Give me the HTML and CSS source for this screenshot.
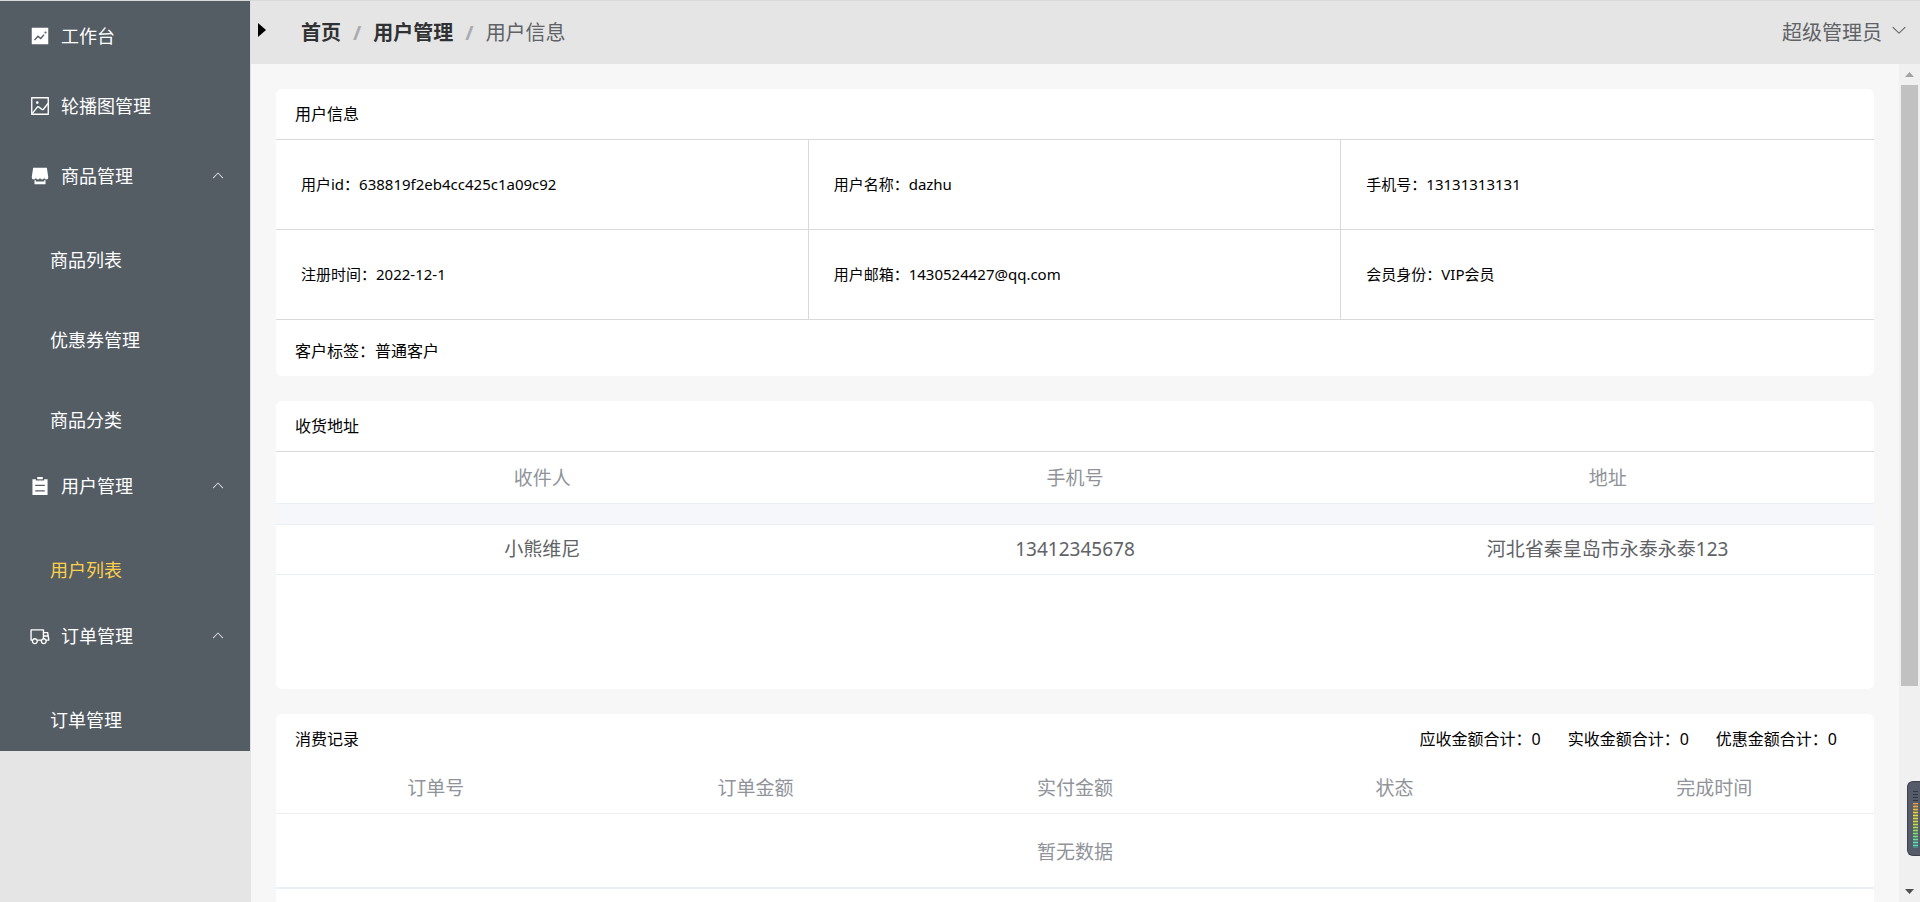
FILE: index.html
```html
<!DOCTYPE html>
<html lang="zh-CN">
<head>
<meta charset="utf-8">
<title>用户信息</title>
<link rel="stylesheet" href="styles.css">
</head>
<body>
<div class="app">
  <aside class="sidebar">
    <nav class="menu">
      <a class="menu-item" href="#">
        <svg class="menu-icon" viewBox="0 0 1024 1024"><path d="M128 896V128h768v768H128zm291.712-327.296 128 102.4 180.16-201.792-47.744-42.624-139.84 156.608-128-102.4-180.16 201.792 47.744 42.624 139.84-156.608zM816 352a48 48 0 1 0-96 0 48 48 0 0 0 96 0z"/></svg>
        <span>工作台</span>
      </a>
      <a class="menu-item" href="#">
        <svg class="menu-icon" viewBox="0 0 1024 1024"><path d="M160 160v704h704V160H160zm-32-64h768a32 32 0 0 1 32 32v768a32 32 0 0 1-32 32H128a32 32 0 0 1-32-32V128a32 32 0 0 1 32-32z"/><path d="M384 288q64 0 64 64t-64 64q-64 0-64-64t64-64zM185.408 876.992l-50.816-38.912L350.72 556.032a96 96 0 0 1 134.592-17.856l1.856 1.472 122.88 99.136a32 32 0 0 0 44.992-4.864l216-269.888 49.92 39.936-215.808 269.824-.256.32a96 96 0 0 1-135.04 14.464l-122.88-99.072-.64-.512a32 32 0 0 0-44.8 5.952L185.408 876.992z"/></svg>
        <span>轮播图管理</span>
      </a>
      <button class="menu-item" type="button" aria-expanded="true">
        <svg class="menu-icon" viewBox="0 0 1024 1024"><path d="M704 704h64v192H256V704h64v64h384v-64zm188.544-152.192C894.528 559.616 896 567.616 896 576a96 96 0 1 1-192 0 96 96 0 1 1-192 0 96 96 0 1 1-192 0 96 96 0 1 1-192 0c0-8.384 1.408-16.384 3.392-24.192L192 128h640l60.544 423.808z"/></svg>
        <span>商品管理</span>
        <svg class="menu-arrow" viewBox="0 0 1024 1024"><path d="m488.832 344.32-339.84 356.672a32 32 0 0 0 0 44.16l.384.384a29.44 29.44 0 0 0 42.688 0l320-335.872 319.872 335.872a29.44 29.44 0 0 0 42.688 0l.384-.384a32 32 0 0 0 0-44.16L535.168 344.32a32 32 0 0 0-46.336 0z"/></svg>
      </button>
      <a class="submenu-item" href="#">商品列表</a>
      <a class="submenu-item" href="#">优惠券管理</a>
      <a class="submenu-item" href="#">商品分类</a>
      <button class="menu-item" type="button" aria-expanded="true">
        <svg class="menu-icon" viewBox="0 0 1024 1024"><path d="M704 192h160v736H160V192h160v64h384v-64zM288 512h448v-64H288v64zm0 256h448v-64H288v64zm96-576V96h256v96H384z"/></svg>
        <span>用户管理</span>
        <svg class="menu-arrow" viewBox="0 0 1024 1024"><path d="m488.832 344.32-339.84 356.672a32 32 0 0 0 0 44.16l.384.384a29.44 29.44 0 0 0 42.688 0l320-335.872 319.872 335.872a29.44 29.44 0 0 0 42.688 0l.384-.384a32 32 0 0 0 0-44.16L535.168 344.32a32 32 0 0 0-46.336 0z"/></svg>
      </button>
      <a class="submenu-item is-active" href="#">用户列表</a>
      <button class="menu-item" type="button" aria-expanded="true">
        <svg class="menu-icon" viewBox="0 0 1024 1024"><path d="M128.896 736H96a32 32 0 0 1-32-32V224a32 32 0 0 1 32-32h576a32 32 0 0 1 32 32v96h164.544a32 32 0 0 1 31.616 27.136l54.144 352A32 32 0 0 1 922.688 736h-91.52a144 144 0 1 1-286.272 0H415.104a144 144 0 1 1-286.272 0zm23.36-64a143.872 143.872 0 0 1 239.488 0H568.32c17.088-25.6 42.24-45.376 71.744-55.808V256H128v416h24.256zm655.488 0h77.632l-19.648-128H704v64.896A144 144 0 0 1 807.744 672zm48.128-192-14.72-96H704v96h151.872zM688 832a80 80 0 1 0 0-160 80 80 0 0 0 0 160zm-416 0a80 80 0 1 0 0-160 80 80 0 0 0 0 160z"/></svg>
        <span>订单管理</span>
        <svg class="menu-arrow" viewBox="0 0 1024 1024"><path d="m488.832 344.32-339.84 356.672a32 32 0 0 0 0 44.16l.384.384a29.44 29.44 0 0 0 42.688 0l320-335.872 319.872 335.872a29.44 29.44 0 0 0 42.688 0l.384-.384a32 32 0 0 0 0-44.16L535.168 344.32a32 32 0 0 0-46.336 0z"/></svg>
      </button>
      <a class="submenu-item" href="#">订单管理</a>
    </nav>
  </aside>

  <div class="page">
    <header class="topbar">
      <button class="collapse" type="button" aria-label="折叠菜单">
        <svg class="collapse-icon" viewBox="0 0 8 14"><path d="M0 0 8 7 0 14z"/></svg>
      </button>
      <nav class="breadcrumb">
        <a class="crumb" href="#">首页</a>
        <span class="crumb-separator">/</span>
        <a class="crumb" href="#">用户管理</a>
        <span class="crumb-separator">/</span>
        <span class="crumb-current">用户信息</span>
      </nav>
      <button class="account" type="button">
        <span>超级管理员</span>
        <svg class="account-arrow" viewBox="0 0 1024 1024"><path d="M831.872 340.864 512 652.672 192.128 340.864a30.592 30.592 0 0 0-42.752 0 29.12 29.12 0 0 0 0 41.6L489.664 714.24a32 32 0 0 0 44.672 0l340.288-331.712a29.12 29.12 0 0 0 0-41.728 30.592 30.592 0 0 0-42.752 0z"/></svg>
      </button>
    </header>

    <div class="viewport">
      <main class="content">
        <section class="card">
          <h2 class="card-title">用户信息</h2>
          <div class="info-grid">
            <div class="info-cell">用户id：638819f2eb4cc425c1a09c92</div>
            <div class="info-cell">用户名称：dazhu</div>
            <div class="info-cell">手机号：13131313131</div>
            <div class="info-cell">注册时间：2022-12-1</div>
            <div class="info-cell">用户邮箱：1430524427@qq.com</div>
            <div class="info-cell">会员身份：VIP会员</div>
          </div>
          <p class="card-note">客户标签：普通客户</p>
        </section>

        <section class="card address-card">
          <h2 class="card-title card-title-ruled">收货地址</h2>
          <table class="table">
            <thead>
              <tr><th>收件人</th><th>手机号</th><th>地址</th></tr>
            </thead>
            <tbody>
              <tr class="strip"><td colspan="3"></td></tr>
              <tr><td>小熊维尼</td><td>13412345678</td><td>河北省秦皇岛市永泰永泰123</td></tr>
            </tbody>
          </table>
        </section>

        <section class="card records-card">
          <div class="card-head">
            <h2 class="card-title">消费记录</h2>
            <div class="totals">
              <span>应收金额合计：0</span>
              <span>实收金额合计：0</span>
              <span>优惠金额合计：0</span>
            </div>
          </div>
          <table class="table">
            <thead>
              <tr><th>订单号</th><th>订单金额</th><th>实付金额</th><th>状态</th><th>完成时间</th></tr>
            </thead>
            <tbody>
              <tr class="empty"><td colspan="5">暂无数据</td></tr>
            </tbody>
          </table>
        </section>
      </main>

      <div class="scrollbar">
        <svg class="scroll-arrow scroll-arrow-up" viewBox="0 0 9 5"><path d="M0 5 4.500 0 9 5z"/></svg>
        <div class="scroll-thumb"></div>
        <div class="scroll-rest"></div>
        <svg class="scroll-arrow" viewBox="0 0 9 5"><path d="M0 0 4.500 5 9 0z"/></svg>
      </div>
    </div>
  </div>

  <div class="meter">
    <div class="meter-idle"></div>
    <div class="meter-level"></div>
  </div>
</div>
</body>
</html>
```
FILE: styles.css
```css
* {
  box-sizing: border-box;
}

body {
  margin: 0;
  font-family: "Noto Sans", "Noto Sans CJK SC", sans-serif;
  color: #000;
}

button {
  margin: 0;
  padding: 0;
  border: 0;
  background: none;
  font: inherit;
  text-align: left;
}

a {
  text-decoration: none;
}

.app {
  position: relative;
  display: flex;
  height: 100vh;
  overflow: hidden;
  border-top: 1px solid #d9d9d9;
}

/* Sidebar */
.sidebar {
  flex: 0 0 251px;
  background: #e5e5e5;
}

.menu {
  display: flex;
  flex-direction: column;
  border-right: 1px solid #dcdfe6;
  background: #545c64;
  font-size: 18px;
  color: #fff;
}

.menu-item {
  display: flex;
  align-items: center;
  gap: 10px;
  height: 70px;
  padding: 0 25px 2px 29px;
  color: #fff;
}

.menu-icon {
  width: 22px;
  height: 22px;
  margin-top: 2px;
  fill: #fff;
}

.menu-arrow {
  width: 14px;
  height: 14px;
  margin-left: auto;
  fill: #e5e5e5;
}

.submenu-item {
  height: 80px;
  padding: 18px 0 0 50px;
  line-height: 62px;
  color: #fff;
}

.submenu-item.is-active {
  color: #ffd04b;
}

/* Top bar */
.page {
  flex: 1;
  min-width: 0;
  display: flex;
  flex-direction: column;
}

.topbar {
  flex: 0 0 63px;
  display: flex;
  align-items: center;
  padding: 0 12px 0 7px;
  background: #e5e5e5;
  font-size: 20px;
  line-height: 28px;
  color: #606266;
}

.collapse {
  display: flex;
  align-items: center;
  width: 43px;
  height: 58px;
  align-self: flex-start;
}

.collapse-icon {
  width: 8px;
  height: 14px;
}

.breadcrumb {
  display: flex;
  gap: 12px;
}

.crumb {
  font-weight: 700;
  color: #303133;
}

.crumb-separator {
  font-weight: 700;
  color: #a8abb2;
}

.account {
  display: flex;
  align-items: center;
  gap: 8px;
  margin-left: auto;
  color: #606266;
}

.account-arrow {
  width: 18px;
  height: 18px;
  margin-bottom: 6px;
  fill: #606266;
}

/* Content */
.viewport {
  flex: 1;
  min-height: 0;
  display: flex;
}

.content {
  flex: 1;
  min-width: 0;
  display: flex;
  flex-direction: column;
  gap: 25px;
  padding: 25px;
  overflow: hidden;
  background: #f7f7f7;
}

.card {
  flex-shrink: 0;
  border-radius: 6px;
  background: #fff;
}

.address-card,
.records-card {
  min-height: 288px;
}

.card-title {
  margin: 0;
  padding: 0 19px;
  font-size: 16px;
  font-weight: 400;
  line-height: 50px;
}

.card-title-ruled {
  border-bottom: 1px solid #d9d9d9;
}

.card-note {
  margin: 0;
  padding: 6px 19px 0;
  font-size: 16px;
  line-height: 50px;
}

.info-grid {
  display: grid;
  grid-template-columns: repeat(3, 1fr);
  border-top: 1px solid #d9d9d9;
}

.info-cell {
  height: 90px;
  padding-left: 25px;
  border-right: 1px solid #d9d9d9;
  border-bottom: 1px solid #d9d9d9;
  font-size: 15px;
  line-height: 89px;
}

.info-cell:nth-child(3n) {
  border-right: 0;
}

.card-head {
  display: flex;
  justify-content: space-between;
}

.totals {
  display: flex;
  gap: 27px;
  padding-right: 37px;
  font-size: 16px;
  line-height: 50px;
}

/* Tables */
.table {
  width: 100%;
  table-layout: fixed;
  border-collapse: separate;
  border-spacing: 0;
  font-size: 19px;
  line-height: 28px;
  text-align: center;
  color: #606266;
}

.table th,
.table td {
  height: 50px;
  padding: 0 0 2px;
  border-bottom: 1px solid #ebeef5;
}

.table th {
  height: 52px;
  padding: 0;
  font-weight: 400;
  color: #909399;
}

.records-card .table th {
  height: 50px;
  padding-bottom: 2px;
}

.table .strip td {
  height: 21px;
  background: #f5f7fa;
}

.table .empty td {
  height: 75px;
  padding: 2px 0 0;
  border-bottom-width: 2px;
  color: #909399;
}

/* Scrollbar */
.scrollbar {
  flex: 0 0 21px;
  display: flex;
  flex-direction: column;
  align-items: center;
  background: #f0f0f0;
}

.scroll-arrow {
  width: 9px;
  height: 5px;
  margin: 8px 0;
  fill: #505050;
}

.scroll-arrow-up {
  fill: #a3a3a3;
}

.scroll-thumb {
  flex: 601;
  width: 17px;
  background: #c1c1c1;
}

.scroll-rest {
  flex: 195;
}

/* Floating level meter */
.meter {
  position: absolute;
  right: 0;
  bottom: 46px;
  width: 13px;
  height: 75px;
  padding: 9px 2px 8px 5px;
  border: 1px solid #3c414b;
  border-right: 0;
  border-radius: 6px 0 0 6px;
  background: #565b69;
}

.meter-idle {
  width: 5px;
  height: 12px;
  background: repeating-linear-gradient(#33363f 0 1px, #565b69 1px 3px);
}

.meter-level {
  width: 5px;
  height: 45px;
  background:
    repeating-linear-gradient(transparent 0 1px, rgba(60, 70, 80, 0.55) 1px 3px),
    linear-gradient(#f09a50, #e6d84a 25%, #c8dc50 45%, #8edc78 65%, #4fe0c8);
}
```
